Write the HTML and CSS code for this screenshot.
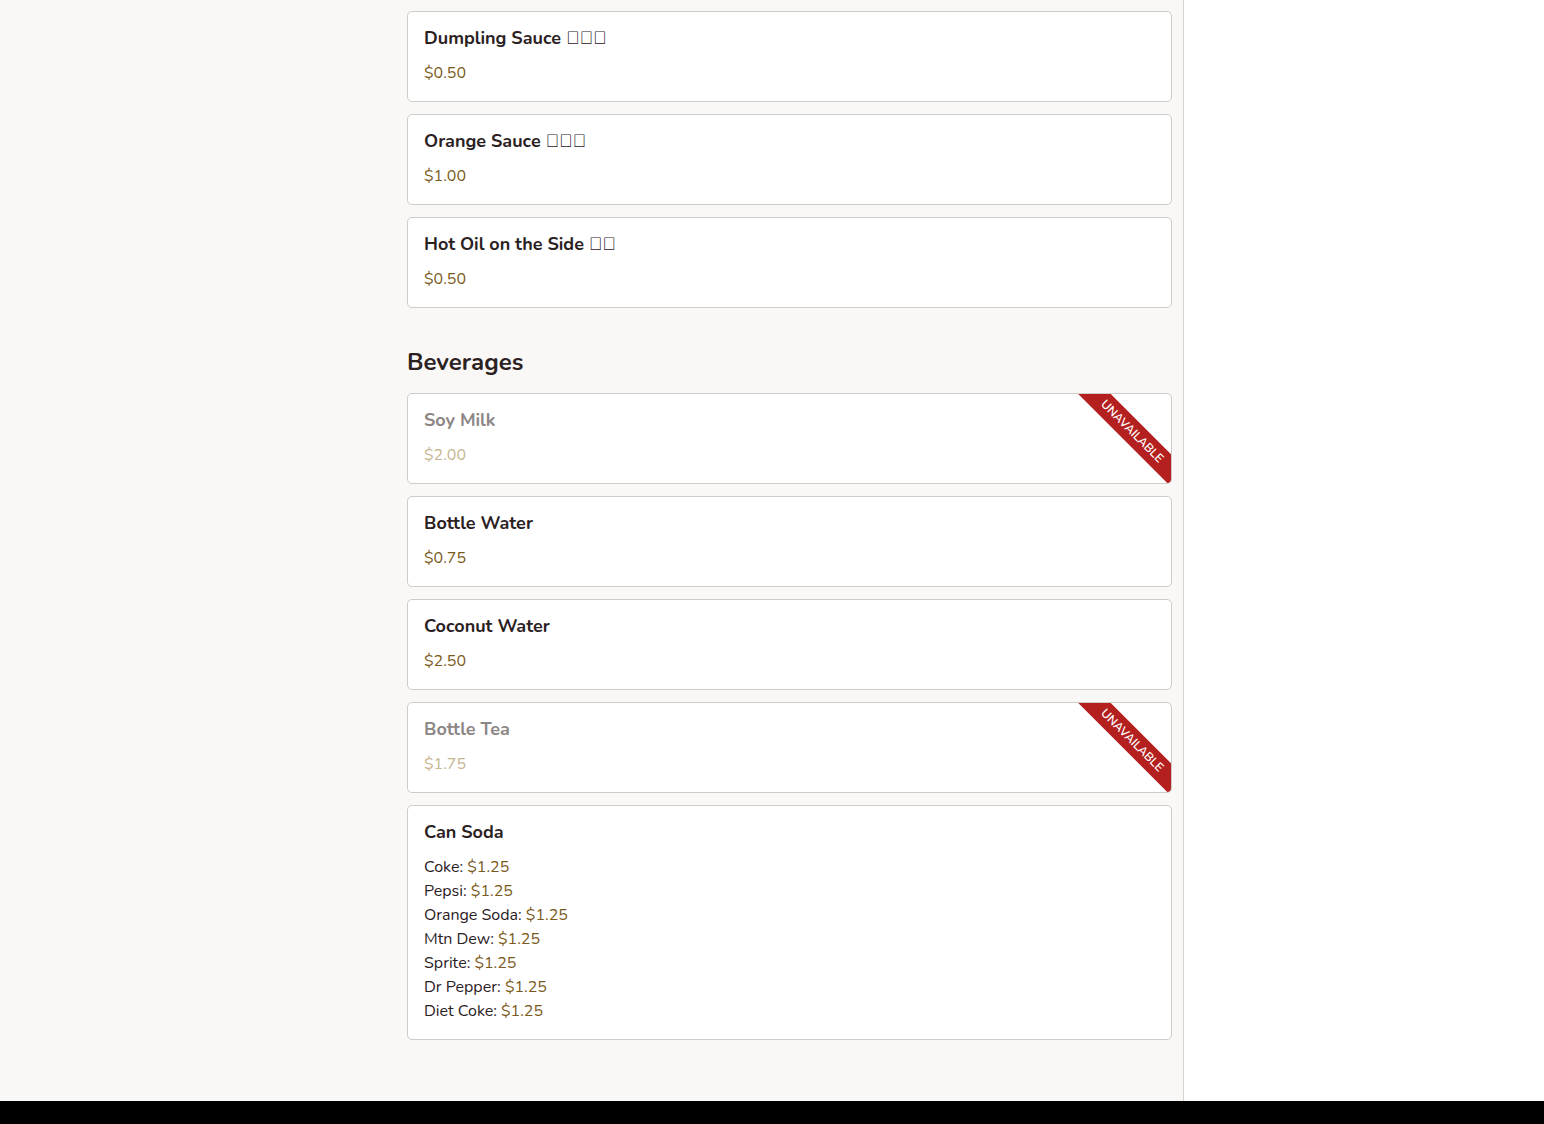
FILE: index.html
```html
<!DOCTYPE html>
<html lang="en">
<head>
<meta charset="utf-8">
<title>Menu</title>
<link rel="stylesheet" href="styles.css">
</head>
<body>
<div class="page">
  <div class="main">
    <div class="nav-space"></div>
    <div class="content">
      <div class="card">
        <div class="item-name">Dumpling Sauce <span class="glyphs">&#xF0000;&#xF0000;&#xF0000;</span></div>
        <div class="item-price">$0.50</div>
      </div>
      <div class="card">
        <div class="item-name">Orange Sauce <span class="glyphs">&#xF0000;&#xF0000;&#xF0000;</span></div>
        <div class="item-price">$1.00</div>
      </div>
      <div class="card">
        <div class="item-name">Hot Oil on the Side <span class="glyphs">&#xF0000;&#xF0000;</span></div>
        <div class="item-price">$0.50</div>
      </div>

      <h2 class="section-title">Beverages</h2>

      <div class="card unavailable">
        <div class="item-name">Soy Milk</div>
        <div class="item-price">$2.00</div>
        <div class="ribbon">Unavailable</div>
      </div>
      <div class="card">
        <div class="item-name">Bottle Water</div>
        <div class="item-price">$0.75</div>
      </div>
      <div class="card">
        <div class="item-name">Coconut Water</div>
        <div class="item-price">$2.50</div>
      </div>
      <div class="card unavailable">
        <div class="item-name">Bottle Tea</div>
        <div class="item-price">$1.75</div>
        <div class="ribbon">Unavailable</div>
      </div>
      <div class="card">
        <div class="item-name">Can Soda</div>
        <ul class="options">
          <li>Coke: <span class="opt-price">$1.25</span></li>
          <li>Pepsi: <span class="opt-price">$1.25</span></li>
          <li>Orange Soda: <span class="opt-price">$1.25</span></li>
          <li>Mtn Dew: <span class="opt-price">$1.25</span></li>
          <li>Sprite: <span class="opt-price">$1.25</span></li>
          <li>Dr Pepper: <span class="opt-price">$1.25</span></li>
          <li>Diet Coke: <span class="opt-price">$1.25</span></li>
        </ul>
      </div>
    </div>
  </div>
  <aside class="side"></aside>
</div>
<footer class="bottom-bar"></footer>
</body>
</html>
```
FILE: styles.css
```css
* { box-sizing: border-box; }
html, body { margin: 0; padding: 0; }
body {
  font-family: "Nunito", "Lato", "Noto Sans", sans-serif;
  color: #2b211f;
  background: #ffffff;
  height: 1124px;
  overflow: hidden;
  display: flex;
  flex-direction: column;
}
.page {
  display: flex;
  height: 1101px;
  overflow: hidden;
}
.main {
  width: 1184px;
  background: #faf8f6;
  border-right: 1px solid #d6d3d0;
  display: flex;
  padding-top: 11px;
}
.nav-space { width: 407px; flex: none; }
.content {
  width: 765px;
  display: flex;
  flex-direction: column;
  gap: 12px;
}
.side { flex: 1; background: #ffffff; }
.bottom-bar { height: 23px; background: #000000; flex: none; }

.card {
  position: relative;
  overflow: hidden;
  background: #ffffff;
  border: 1px solid #cfcbc7;
  border-radius: 5px;
  padding: 14px 16px 16px;
  min-height: 91px;
}
.item-name {
  font-size: 18px;
  font-weight: 700;
  line-height: 24px;
  color: #2b211f;
}
.glyphs {
  font-family: "Liberation Sans", sans-serif;
  font-weight: 400;
}
.item-price {
  margin-top: 12px;
  font-size: 16px;
  line-height: 22px;
  color: #7a5a1c;
}
.unavailable .item-name { color: #8c8685; }
.unavailable .item-price { color: #c6b68f; }

.ribbon {
  position: absolute;
  top: 26px;
  right: -41px;
  width: 160px;
  height: 23px;
  background: #b3201f;
  color: #ffffff;
  font-size: 12px;
  font-weight: 600;
  line-height: 23px;
  text-align: center;
  text-transform: uppercase;
  transform: rotate(45deg);
}

.section-title {
  margin: 26px 0 3px;
  font-size: 24px;
  font-weight: 700;
  line-height: 32px;
  color: #2b211f;
}

.options {
  list-style: none;
  margin: 11px 0 0;
  padding: 0;
  font-size: 16px;
  line-height: 24px;
  color: #2b211f;
}
.opt-price { color: #7a5a1c; }
```
